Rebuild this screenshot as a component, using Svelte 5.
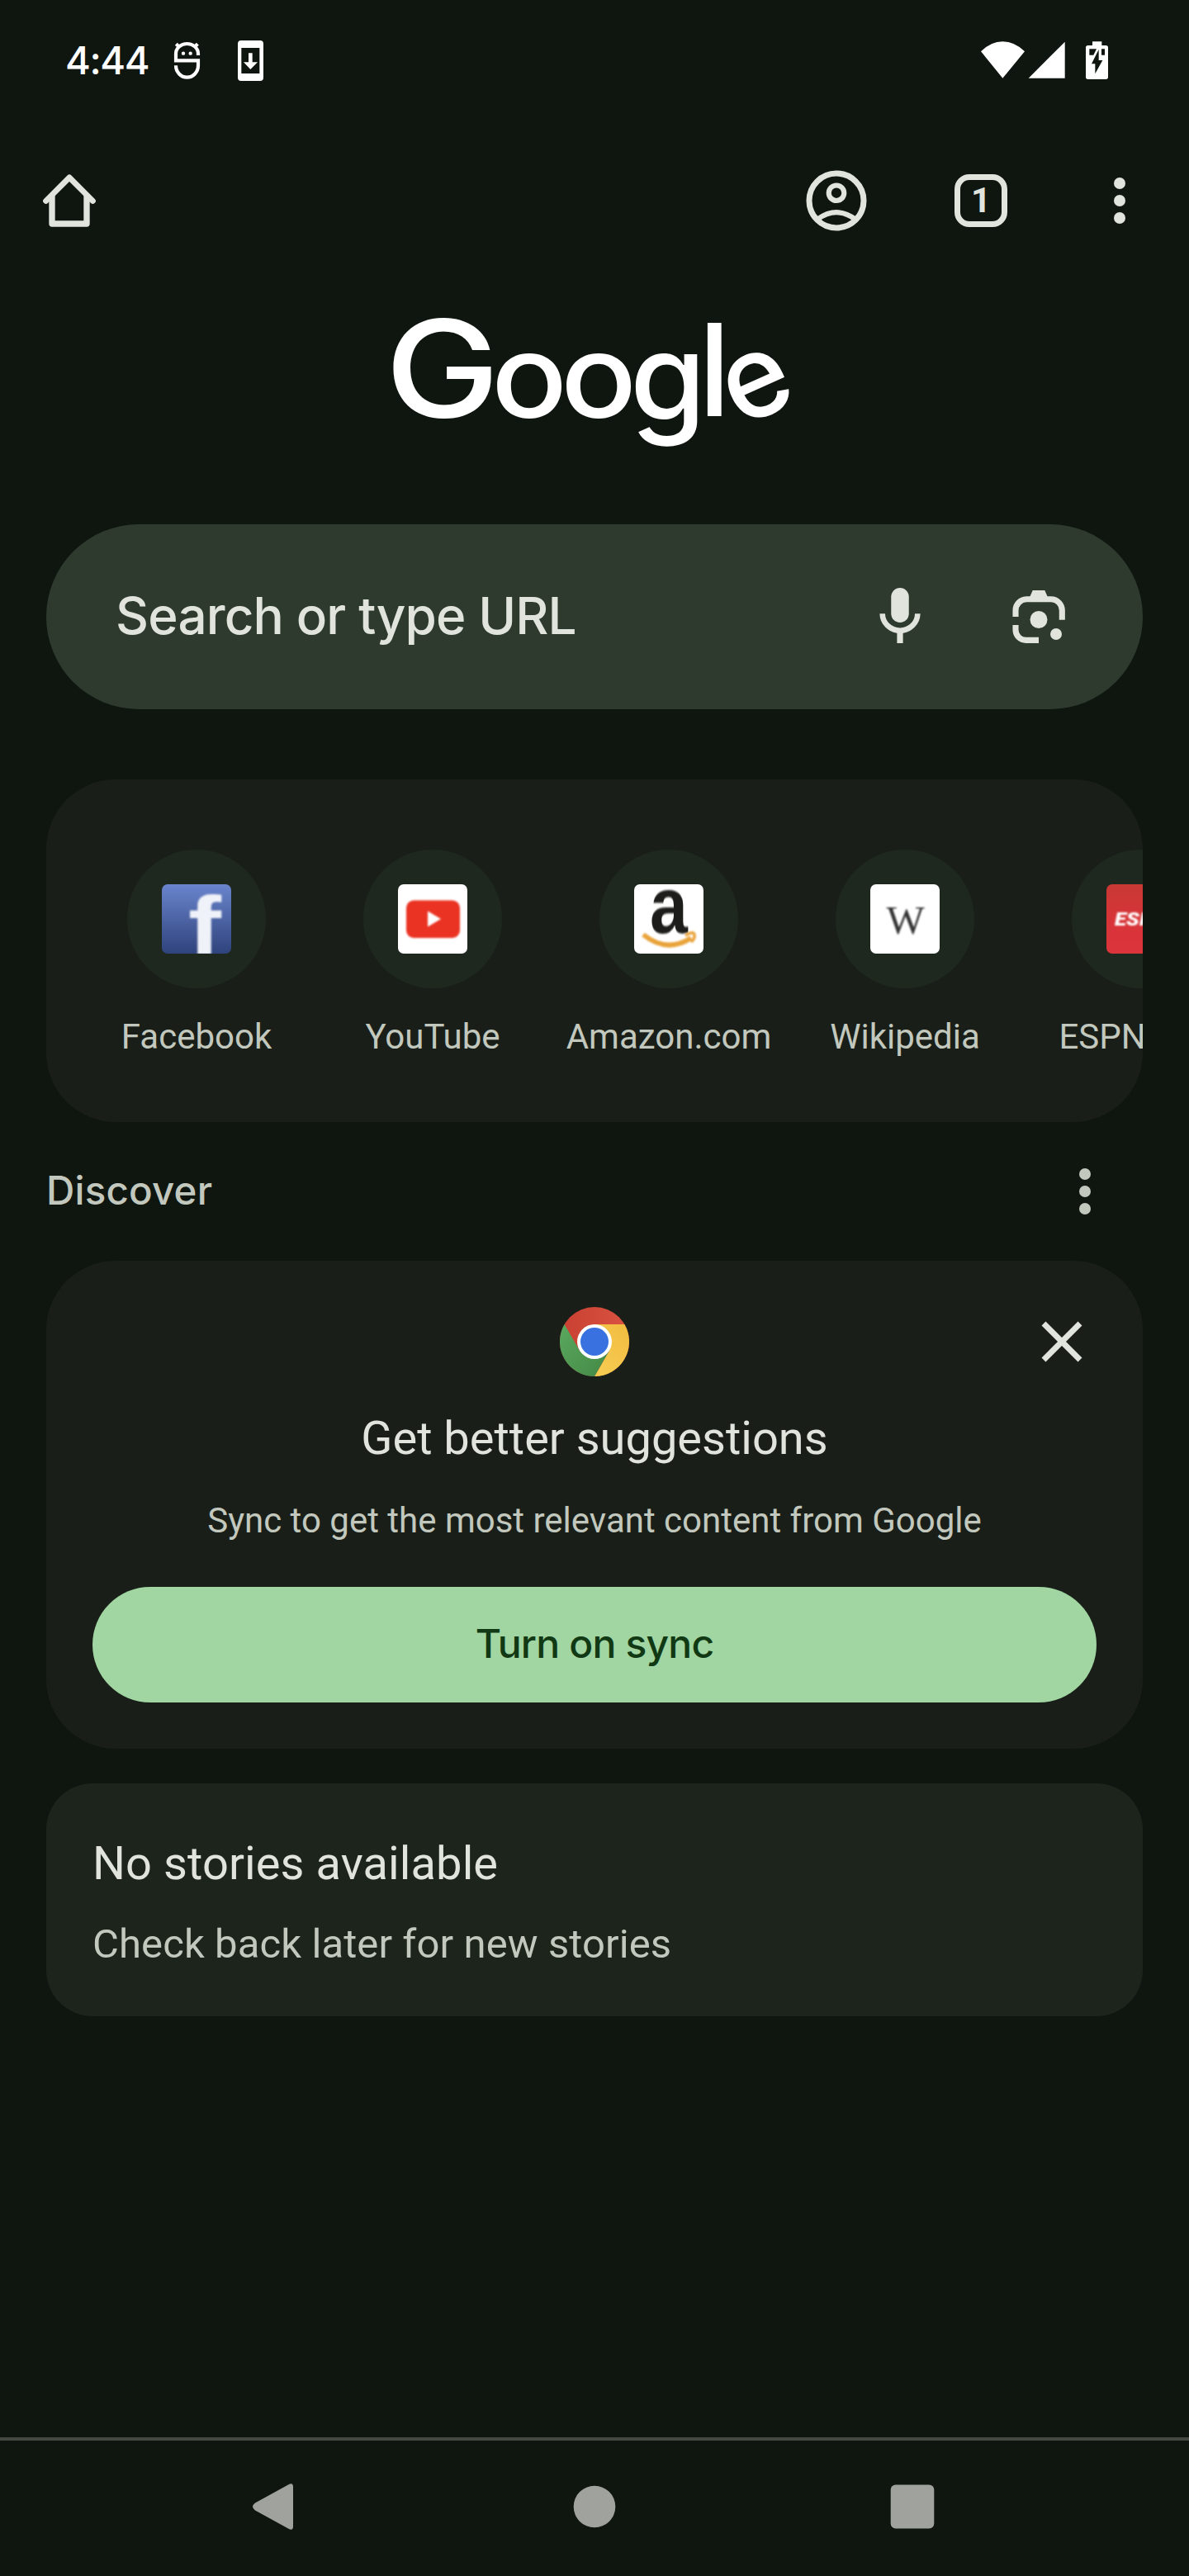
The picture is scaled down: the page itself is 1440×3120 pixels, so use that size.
<script>
  const tiles = ['Facebook', 'YouTube', 'Amazon.com', 'Wikipedia', 'ESPN.com'];
</script>

{#snippet dots()}
  <svg class="icon" viewBox="0 0 24 24" fill="currentColor">
    <circle cx="12" cy="6" r="2" /><circle cx="12" cy="12" r="2" /><circle cx="12" cy="18" r="2" />
  </svg>
{/snippet}

<div class="screen">
  <header class="status">
    <span class="time">4:44</span>
    <svg class="debug" viewBox="627 147 105 147" fill="none" stroke="#fff" stroke-width="12.500">
      <path d="M720 201v-6a40.500 36 0 0 0-81 0V220H720V238a40.500 43 0 0 1-81 0" />
      <path d="M652 172l-12-12M706 172l12-12" />
      <g fill="#fff" stroke="none"><circle cx="666" cy="194" r="6.500" /><circle cx="692" cy="194" r="6.500" /></g>
    </svg>
    <svg class="update" viewBox="864 147 93 147" fill="#fff">
      <path fill-rule="evenodd" d="M876 147H945a12 12 0 0 1 12 12V282a12 12 0 0 1-12 12H876a12 12 0 0 1-12-12V159a12 12 0 0 1 12-12ZM877 174V267H943V174Z" />
      <path d="M903 193h14v33h19l-26 26l-25-26h18Z" />
    </svg>
    <svg class="signals" viewBox="744 147 462 147" fill="#fff">
      <path d="M823 284L744 187Q780 151 823 151T903 187Z" />
      <path d="M917 284L1049 152V284Z" />
      <path fill-rule="evenodd" d="M1149 151h34v14h15a8 8 0 0 1 8 8V280a8 8 0 0 1-8 8H1133a8 8 0 0 1-8-8V173a8 8 0 0 1 8-8h16ZM1138 178v22h15l11-22ZM1182 178v22h12v-22ZM1172 180L1146 232H1159V268L1186 219H1172Z" />
    </svg>
  </header>

  <nav class="toolbar">
    <svg class="icon home" viewBox="0 0 24 24" fill="none" stroke="currentColor" stroke-width="2" stroke-linecap="round" stroke-linejoin="round">
      <path d="M3.900 12.100L12 4L20.100 12.100" />
      <path d="M6 10.500V20H18V10.500" stroke-width="2.100" />
    </svg>
    <svg class="icon profile" viewBox="0 0 24 24" fill="none" stroke="currentColor" stroke-width="2">
      <circle cx="12" cy="12" r="9.430" />
      <circle cx="12" cy="9.350" r="2.650" stroke-width="1.750" />
      <path d="M5.400 18.500Q12 13.600 18.600 18.500" stroke-width="1.750" />
    </svg>
    <div class="tabs"><span>1</span></div>
    {@render dots()}
  </nav>

  <main>
    <svg class="logo" viewBox="470 380 500 170" role="img" aria-label="Google">
      <g fill="#fff" text-anchor="middle">
        <text class="cap" transform="translate(535.800 504.800) scale(1.127 .985)">G</text>
        <text class="low" transform="translate(641.200 504.700) scale(1.090 1)">o</text>
        <text class="low" transform="translate(725.200 504.700) scale(1.090 1)">o</text>
        <text class="low" transform="translate(809 509.300) scale(1.060 1.050)">g</text>
        <text class="low ell" transform="translate(865.200 503.700)">l</text>
        <text class="low" transform="translate(917.500 467.500) rotate(-24) translate(0 37) scale(.980 1)">e</text>
      </g>
    </svg>

    <div class="search">
      <span>Search or type URL</span>
      <svg class="icon mic" viewBox="0 0 84 84" fill="currentColor">
        <rect x="31.250" y="7" width="21.500" height="42" rx="10.750" />
        <path d="M20.700 38.300a21.300 20.400 0 0 0 42.600 0" fill="none" stroke="currentColor" stroke-width="6.600" />
        <rect x="38.400" y="61" width="7.200" height="13" />
      </svg>
      <svg class="icon" viewBox="0 0 84 84" fill="currentColor">
        <path d="M14 42V34.500A13.500 13.500 0 0 1 27 20.800H57A13.500 13.500 0 0 1 70.300 34.500V45.700M14 52V58A12.500 12.500 0 0 0 26.500 70.400H42" fill="none" stroke="currentColor" stroke-width="7.100" />
        <path d="M31 18.500L34.700 10H49.300L53 18.500Z" />
        <circle cx="42" cy="45.500" r="10.500" /><circle cx="63" cy="63" r="7" />
      </svg>
    </div>

    <section class="tiles">
      {#each tiles as name, i}
        <div class="tile">
          <div class="disc">
            <svg class="favicon" viewBox="0 0 84 84" aria-hidden="true">
              <defs>
                <linearGradient id="fb" x2="0" y2="1"><stop stop-color="#6a85cd" /><stop offset="1" stop-color="#2f437c" /></linearGradient>
                <linearGradient id="espn" x2="0" y2="1"><stop stop-color="#c73833" /><stop offset=".5" stop-color="#d73438" /><stop offset="1" stop-color="#dc343c" /></linearGradient>
              </defs>
              {#if i === 0}
                <rect width="84" height="84" fill="url(#fb)" />
                <text class="f soft" transform="translate(52 84.500) scale(1.200 1)">f</text>
              {:else if i === 1}
                <rect width="84" height="84" fill="#fff" />
                <g class="soft"><rect x="10" y="19.500" width="65" height="45.500" rx="9" fill="#ea3323" /><path d="M36 32.500L52 42L36 51.500Z" fill="#fff" /></g>
              {:else if i === 2}
                <rect width="84" height="84" fill="#fff" />
                <text class="a soft" transform="translate(42 59) scale(.850 1)">a</text>
                <g class="soft" fill="none" stroke="#e9a33a"><path d="M11 61Q40 84 69 65" stroke-width="6" /><path d="M62 62Q72 56 73 61T69 70" stroke-width="3.500" /></g>
              {:else if i === 3}
                <rect width="84" height="84" fill="#fff" />
                <text class="w soft" x="42.500" y="60">W</text>
              {:else}
                <rect width="84" height="84" fill="url(#espn)" />
                <text class="e soft" transform="translate(42 50) scale(1.180 1)">ESPN</text>
              {/if}
            </svg>
          </div>
          <span class="label">{name}</span>
        </div>
      {/each}
    </section>

    <div class="discover">
      <h2>Discover</h2>
      {@render dots()}
    </div>

    <section class="promo">
      <svg class="close" viewBox="0 0 84 84" stroke="currentColor" stroke-width="7"><path d="M20 20L64 64M64 20L20 64" /></svg>
      <svg class="chrome" viewBox="-42 -42 84 84">
        <defs>
          <linearGradient id="red"><stop stop-color="#c84031" /><stop offset="1" stop-color="#da5241" /></linearGradient>
          <linearGradient id="green" x1="0" y1=".2" x2="1" y2="1"><stop stop-color="#58a55c" /><stop offset="1" stop-color="#438845" /></linearGradient>
          <linearGradient id="yellow" x1="1" y1="0" x2=".3" y2="1"><stop stop-color="#f1bc40" /><stop offset="1" stop-color="#f6cb51" /></linearGradient>
        </defs>
        <circle r="42" fill="url(#red)" />
        <path d="M0-21H36.400A42 42 0 0 1 0 42L18.200 10.500Z" fill="url(#yellow)" />
        <path d="M0 42A42 42 0 0 1-36.400-21L-18.200 10.500L18.200 10.500Z" fill="url(#green)" />
        <circle r="21" fill="#fff" /><circle r="17" fill="#3972e0" />
      </svg>
      <h3>Get better suggestions</h3>
      <p>Sync to get the most relevant content from Google</p>
      <button>Turn on sync</button>
    </section>

    <section class="stories">
      <h3>No stories available</h3>
      <p>Check back later for new stories</p>
    </section>
  </main>

  <footer>
    <svg viewBox="0 0 100 100"><path d="M24 45.500L64 23.500Q70 20 70 26V74Q70 80 64 76.500L24 54.500Q18 50 24 45.500Z" /></svg>
    <svg viewBox="0 0 100 100"><circle cx="50" cy="50" r="25.300" /></svg>
    <svg viewBox="0 0 100 100"><rect x="23.700" y="23.500" width="52.600" height="53" rx="6" /></svg>
  </footer>
</div>

<style>
  :global(body) { margin: 0; background: #0f1610; }
  .screen {
    width: 1440px; height: 3120px; box-sizing: border-box; overflow: hidden;
    display: flex; flex-direction: column;
    background: #0f1610; color: #e1e3dd; font-family: Roboto, sans-serif;
  }
  svg { display: block; flex: none; }
  h2, h3, p { margin: 0; font-weight: 400; }
  .icon { width: 84px; height: 84px; }

  .status { height: 145px; flex: none; box-sizing: border-box; padding: 0 98px 0 79px; display: flex; align-items: center; color: #fff; }
  .time { font: 550 47px/60px Inter, sans-serif; letter-spacing: -1.400px; width: 130px; white-space: nowrap; }
  .debug { width: 35px; height: 49px; margin-top: 2px; }
  .update { width: 31px; height: 49px; margin: 2px 0 0 44px; }
  .signals { width: 154px; height: 49px; margin: 2px 0 0 auto; }

  .toolbar { height: 196px; flex: none; box-sizing: border-box; padding: 0 42px; display: flex; align-items: center; }
  .profile { margin-left: auto; margin-right: 101px; }
  .tabs { box-sizing: border-box; width: 64px; height: 64px; margin-right: 94px; border: 7px solid; border-radius: 18px; display: grid; place-items: center; }
  .tabs span { font: 700 42px/50px Roboto, sans-serif; }

  main { padding: 0 56px; flex: 1; display: flex; flex-direction: column; }
  .logo { width: 500px; height: 170px; margin: 39px 0 85px 414px; font-family: Inter, sans-serif; }
  .cap { font-size: 165px; font-weight: 450; }
  .low { font-size: 140px; font-weight: 510; }
  .ell { font-size: 155px; font-weight: 540; }

  .search { height: 224px; flex: none; box-sizing: border-box; padding: 0 84px; border-radius: 112px; background: #2d3a2d; display: flex; align-items: center; }
  .search span { font: 500 62px/80px Inter, sans-serif; letter-spacing: -.850px; margin-right: auto; padding-bottom: 3px; }
  .mic { margin-right: 84px; }

  .tiles { height: 415px; flex: none; box-sizing: border-box; margin-top: 85px; padding: 85px 0 0 39px; border-radius: 84px; background: #191f18; display: flex; overflow: hidden; }
  .tile { width: 286px; flex: none; display: flex; flex-direction: column; align-items: center; }
  .disc { width: 168px; height: 168px; border-radius: 50%; background: #1f281f; display: grid; place-items: center; }
  .favicon { width: 84px; height: 84px; border-radius: 7px; }
  .favicon text { text-anchor: middle; }
  .soft { filter: blur(.9px); }
  .f { font: 700 100px "Liberation Sans", sans-serif; fill: #f0f2f9; }
  .a { font: 700 97px "Liberation Sans", sans-serif; fill: #1d1d1b; }
  .w { font: 400 49px "Liberation Serif", serif; fill: #333; }
  .e { font: italic 900 22px Roboto, sans-serif; fill: #fff; }
  .label { margin-top: 34px; font-size: 42px; line-height: 50px; color: #c2c8bd; white-space: nowrap; }

  .discover { height: 168px; flex: none; display: flex; align-items: center; justify-content: space-between; padding-right: 28px; color: #c2c8bd; }
  .discover h2 { font: 500 47.500px/60px Inter, sans-serif; letter-spacing: .2px; padding-bottom: 3px; }

  .promo { position: relative; height: 591px; flex: none; box-sizing: border-box; padding: 56px; border-radius: 84px; background: #191f18; display: flex; flex-direction: column; align-items: center; }
  .close { position: absolute; width: 84px; height: 84px; top: 56px; right: 56px; }
  .chrome { width: 84px; height: 84px; }
  h3 { font-size: 56px; line-height: 66px; }
  .promo h3 { margin-top: 42px; }
  .promo p { margin-top: 42px; font-size: 42px; line-height: 50px; color: #c2c8bd; }
  button { align-self: stretch; margin-top: 55px; height: 140px; padding: 0 0 2px; border: 0; border-radius: 70px; background: #a1d5a1; color: #103914; font: 500 48px/60px Inter, sans-serif; letter-spacing: -.8px; }

  .stories { height: 282px; flex: none; box-sizing: border-box; margin-top: 42px; padding: 64px 56px; border-radius: 56px; background: #1c241c; }
  .stories h3 { letter-spacing: .1px; }
  .stories p { margin-top: 36px; font-size: 49px; line-height: 58px; letter-spacing: .1px; color: #c2c8bd; }

  footer { height: 168px; flex: none; box-sizing: border-box; border-top: 4px solid #444a42; padding-bottom: 4px; display: flex; justify-content: center; align-items: center; gap: 285px; }
  footer svg { width: 100px; height: 100px; fill: #a0a29e; }
</style>
